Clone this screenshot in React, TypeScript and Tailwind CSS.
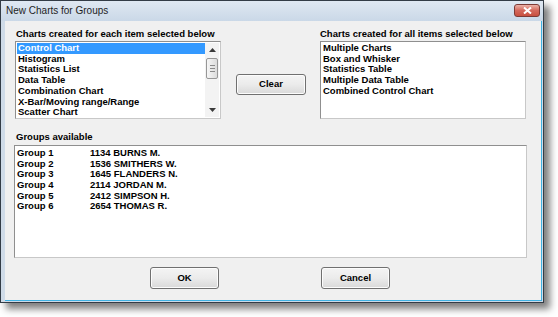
import React from "react";

const eachItems = [
  "Control Chart",
  "Histogram",
  "Statistics List",
  "Data Table",
  "Combination Chart",
  "X-Bar/Moving range/Range",
  "Scatter Chart",
];

const allItems = [
  "Multiple Charts",
  "Box and Whisker",
  "Statistics Table",
  "Multiple Data Table",
  "Combined Control Chart",
];

const groups = [
  { name: "Group 1", person: "1134 BURNS M." },
  { name: "Group 2", person: "1536 SMITHERS W." },
  { name: "Group 3", person: "1645 FLANDERS N." },
  { name: "Group 4", person: "2114 JORDAN M." },
  { name: "Group 5", person: "2412 SIMPSON H." },
  { name: "Group 6", person: "2654 THOMAS R." },
];

// classic win7 push button
const Button = ({ label, className }: { label: string; className: string }) => (
  <div
    className={`flex items-center justify-center rounded-[3px] border border-[#707070] bg-gradient-to-b from-[#f4f4f4] via-[#ebebeb] to-[#d9d9d9] text-[9.5px] font-bold text-black shadow-[inset_0_0_0_1px_#fcfcfc] ${className}`}
  >
    {label}
  </div>
);

const ScrollBar = () => (
  <div className="flex w-[14px] flex-col items-center bg-[#f3f3f3] mr-[1px] my-[1px]">
    <div className="flex h-[14px] w-full items-center justify-center">
      <svg width="7" height="4" viewBox="0 0 7 4">
        <path d="M3.5 0 L7 4 L0 4 Z" fill="#3a3a3a" />
      </svg>
    </div>
    <div className="mt-[1px] flex h-[21px] w-[12px] flex-col items-center justify-center gap-[2px] rounded-[2px] border border-[#979797] bg-gradient-to-r from-[#f6f6f6] to-[#dcdcdc]">
      <div className="h-[1px] w-[5px] bg-[#8a8a8a]" />
      <div className="h-[1px] w-[5px] bg-[#8a8a8a]" />
      <div className="h-[1px] w-[5px] bg-[#8a8a8a]" />
    </div>
    <div className="flex-1" />
    <div className="flex h-[14px] w-full items-center justify-center">
      <svg width="7" height="4" viewBox="0 0 7 4">
        <path d="M0 0 L7 0 L3.5 4 Z" fill="#3a3a3a" />
      </svg>
    </div>
  </div>
);

export default function App() {
  return (
    <div className="h-[317px] w-[558px] bg-white font-['Liberation_Sans',Arial,sans-serif] text-black">
      <div className="flex h-[303px] w-[544px] flex-col border border-[#333c46] bg-[#cfdbe8] shadow-[6px_6px_7px_rgba(0,0,0,0.5)]">
        {/* title bar */}
        <div className="flex h-[20px] items-start bg-gradient-to-b from-[#dfe8f2] to-[#cad8e7]">
          <div className="ml-[5px] mt-[4px] text-[10px] leading-[12px] text-[#1e1e1e]">New Charts for Groups</div>
          <div className="flex-1" />
          <div className="mr-[3px] mt-[3px] flex h-[13px] w-[26px] items-center justify-center rounded-[3px] border border-[#7d3b36] bg-gradient-to-b from-[#eab2a9] via-[#d4685c] to-[#c8503f]">
            <svg width="9" height="7" viewBox="0 0 9 7">
              <path d="M1 0.5 L8 6.5 M8 0.5 L1 6.5" stroke="white" strokeWidth="2" />
            </svg>
          </div>
        </div>

        {/* frame + body */}
        <div className="flex flex-1 pl-[4px] pr-[1px] pb-[1px]">
          <div className="flex flex-1 flex-col border-b border-r border-[#3fb2e4] bg-[#f0f0f0]">
            <div className="mt-[7px] flex">
              <div className="ml-[10px] w-[206px]">
                <div className="h-[12px] whitespace-nowrap pl-[1px] text-[9.5px] font-bold leading-[12px]">
                  Charts created for each item selected below
                </div>
                <div className="mt-[1px] flex h-[78px] border border-[#8f8f8f] border-r-[#c8c8c8] border-b-[#c8c8c8] bg-white">
                  <div className="flex-1 pl-[1px] pt-[1px]">
                    {eachItems.map((item, i) => (
                      <div
                        key={item}
                        className={`whitespace-nowrap pl-[1px] text-[9.5px] font-bold leading-[10.7px] ${i === 0 ? "bg-[#3399ff] text-white" : ""}`}
                      >
                        {item}
                      </div>
                    ))}
                  </div>
                  <ScrollBar />
                </div>
              </div>

              <Button label="Clear" className="ml-[15px] mt-[46px] h-[21px] w-[70px]" />

              <div className="ml-[14px] w-[206px]">
                <div className="h-[12px] whitespace-nowrap text-[9.5px] font-bold leading-[12px]">
                  Charts created for all items selected below
                </div>
                <div className="mt-[1px] h-[78px] border border-[#8f8f8f] border-r-[#c8c8c8] border-b-[#c8c8c8] bg-white pl-[2px] pt-[1px]">
                  {allItems.map((item) => (
                    <div key={item} className="whitespace-nowrap text-[9.5px] font-bold leading-[10.7px]">
                      {item}
                    </div>
                  ))}
                </div>
              </div>
            </div>

            <div className="ml-[11px] mt-[12px] h-[12px] text-[9.5px] font-bold leading-[12px]">Groups available</div>
            <div className="ml-[9px] mt-[2px] h-[113px] w-[513px] border border-[#8f8f8f] border-r-[#c8c8c8] border-b-[#c8c8c8] bg-white pl-[2px] pt-[2px]">
              {groups.map((g) => (
                <div key={g.name} className="flex text-[9.5px] font-bold leading-[10.65px]">
                  <div className="w-[73px]">{g.name}</div>
                  <div>{g.person}</div>
                </div>
              ))}
            </div>

            <div className="mt-[9px] flex">
              <Button label="OK" className="ml-[145px] h-[22px] w-[69px]" />
              <Button label="Cancel" className="ml-[102px] h-[22px] w-[69px]" />
            </div>
          </div>
        </div>
      </div>
    </div>
  );
}
